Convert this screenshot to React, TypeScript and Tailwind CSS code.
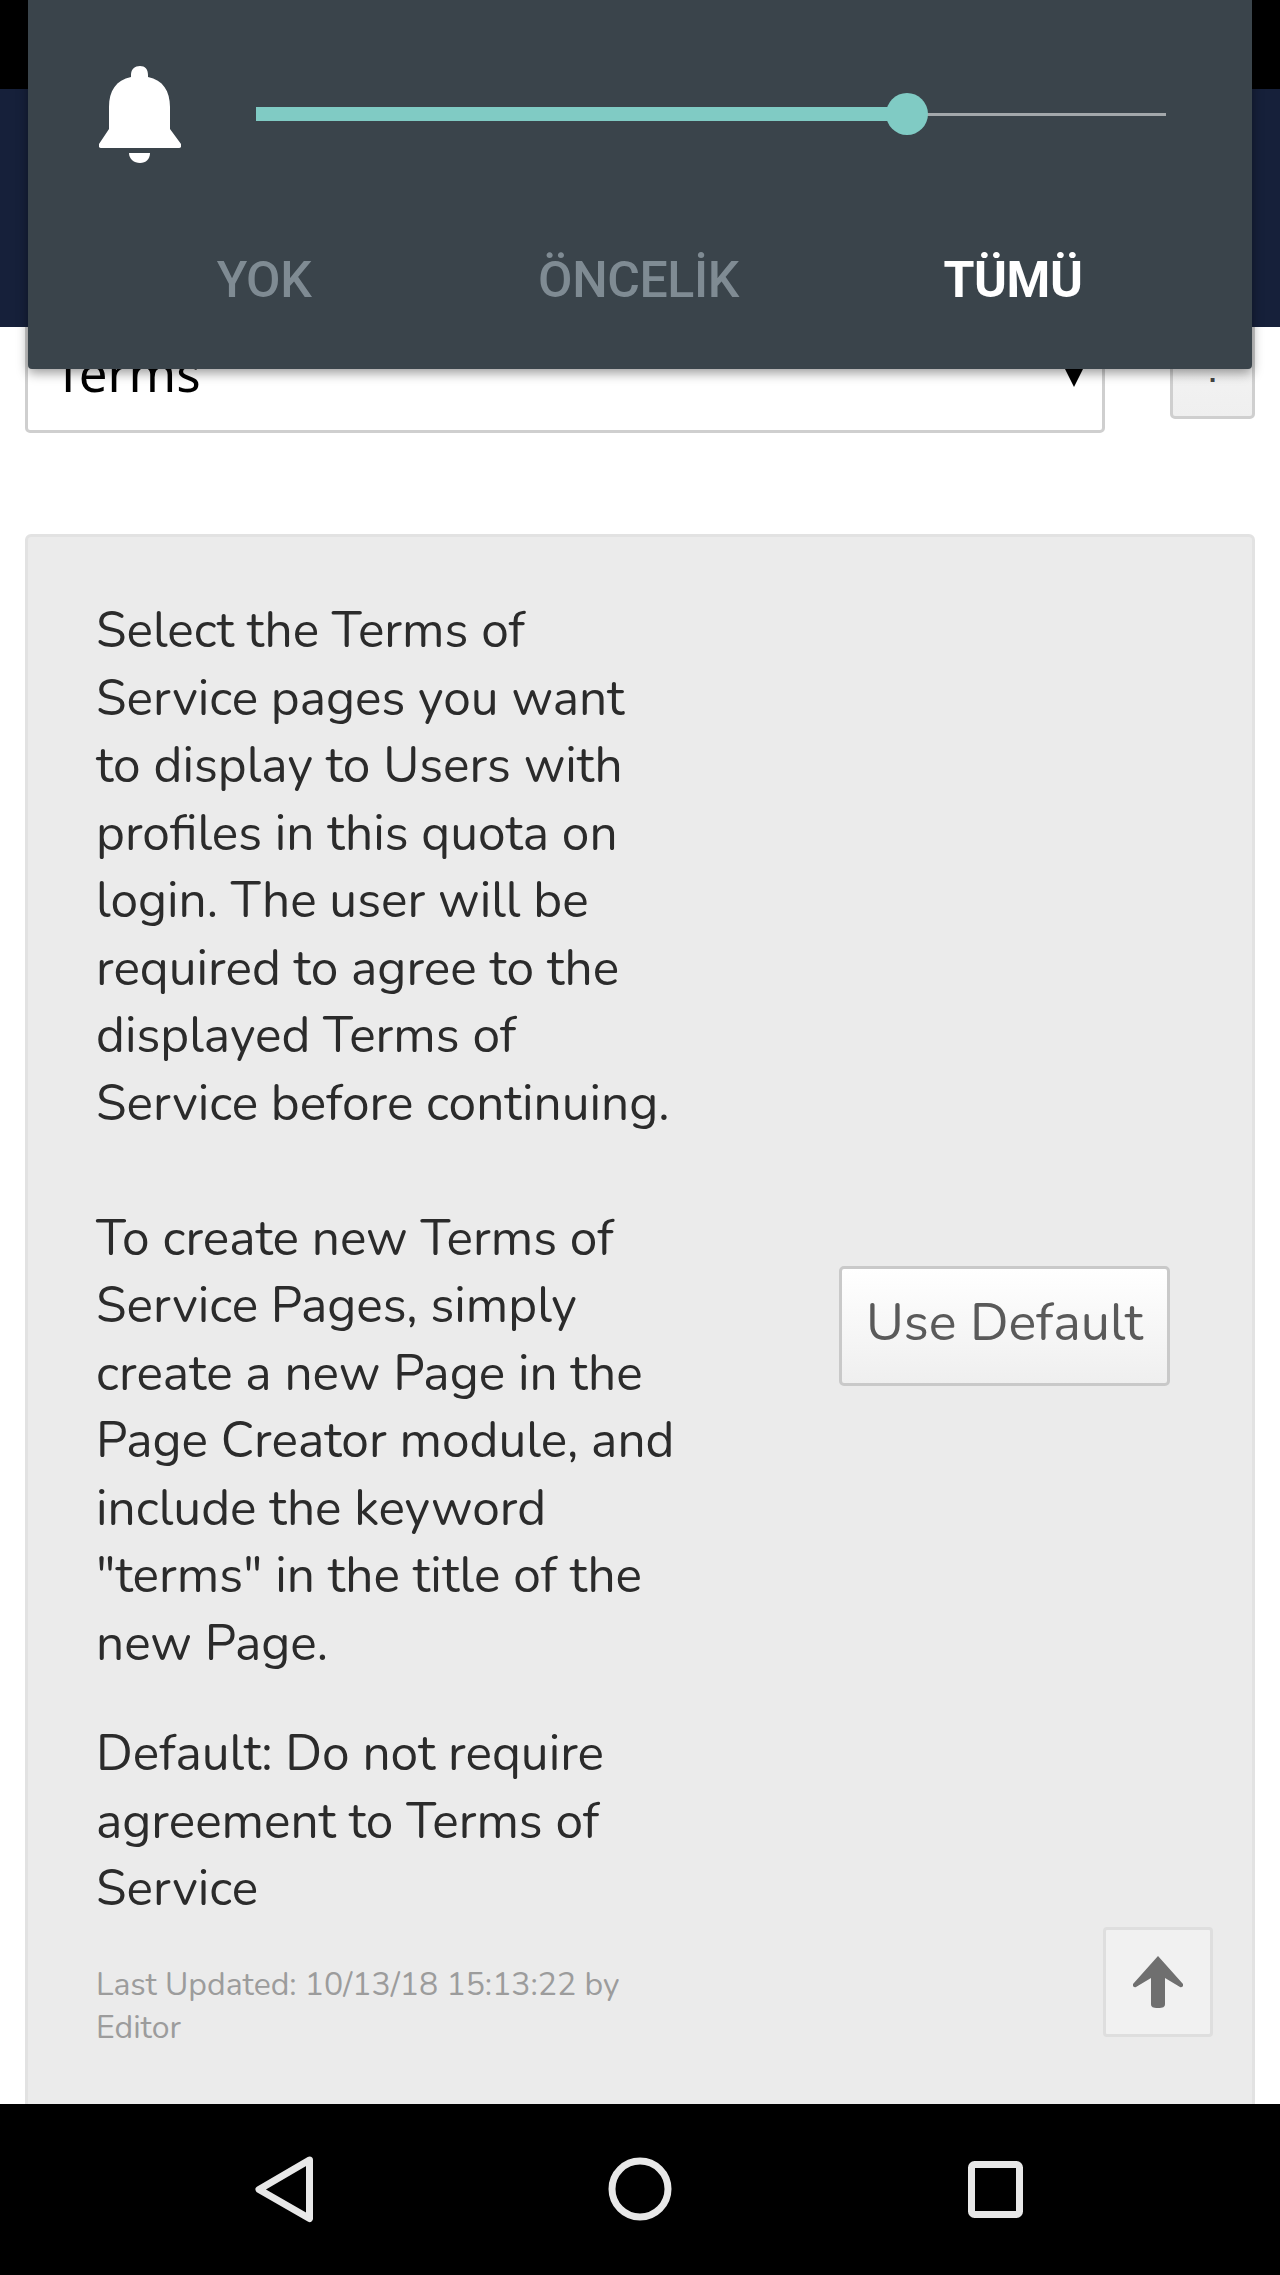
import React from "react";

function Bell() {
  return (
    <svg width="82" height="97" viewBox="0 0 82 97" className="block">
      <path fill="#fff" d="M41 0c5 0 8 3 8 9v2c15 3 22 14 22 30v22l11 15c1 2 0 4-2 4H2c-2 0-3-2-2-4l10-15V41c0-16 7-27 22-30V9c0-6 4-9 9-9z" />
      <path fill="#fff" d="M30 87h21c0 6-4 10-10 10s-11-4-11-10z" />
    </svg>
  );
}

const para1 = ["Select the Terms of", "Service pages you want", "to display to Users with", "profiles in this quota on", "login. The user will be", "required to agree to the", "displayed Terms of", "Service before continuing."];
const para2 = ["To create new Terms of", "Service Pages, simply", "create a new Page in the", "Page Creator module, and", "include the keyword", "\"terms\" in the title of the", "new Page."];
const para3 = ["Default: Do not require", "agreement to Terms of", "Service"];

function Lines({ items }: { items: string[] }) {
  return (
    <>
      {items.map((t) => (
        <div key={t} className="whitespace-nowrap">{t}</div>
      ))}
    </>
  );
}

export default function App() {
  return (
    <div className="relative w-[1280px] h-[2275px] overflow-hidden bg-white flex flex-col font-['Nunito','Lato','Noto_Sans',sans-serif]">
      {/* Notification overlay */}
      <div className="absolute left-[28px] top-0 w-[1224px] h-[369px] z-10 bg-[#3a444b] rounded-b-[4px] shadow-[0_4px_12px_rgba(0,0,0,0.4)] flex flex-col">
        <div className="flex items-center h-[228px] pl-[71px] pr-[86px]">
          <Bell />
          <div className="relative flex items-center ml-[75px] flex-1 h-[44px]">
            <div className="h-[14px] w-[651px] bg-[#80cbc4]" />
            <div className="h-[3px] flex-1 bg-[#a3a8ab]" />
            <div className="absolute left-[630px] top-[1px] w-[42px] h-[42px] rounded-full bg-[#80cbc4]" />
          </div>
        </div>
        <div className="flex pl-[49px] mt-[24px] font-['Roboto',sans-serif] font-medium text-[50px] leading-[56px] tracking-[-0.4px]">
          <div className="w-[374px] text-center text-[#7f8b93]">YOK</div>
          <div className="w-[375px] text-center text-[#7f8b93]">ÖNCELİK</div>
          <div className="w-[374px] text-center text-white font-bold">TÜMÜ</div>
        </div>
      </div>

      {/* Status bar */}
      <div className="h-[89px] bg-black shrink-0" />
      {/* Header */}
      <div className="h-[238px] bg-[#16203a] shrink-0" />

      {/* Content */}
      <div className="flex-1 min-h-0 relative px-[25px] overflow-hidden">
        <div className="flex justify-between items-start -mt-[40px]">
          <div className="w-[1080px] h-[146px] bg-white border-[3px] border-[#cfcfcf] rounded-[5px] flex justify-between pl-[26px] pr-[17px] text-[51px] leading-[68px] text-black font-['Noto_Sans',sans-serif]">
            <span className="mt-[48px]">Terms</span>
            <svg width="22" height="22" viewBox="0 0 22 22" className="mt-[75px]">
              <path fill="#000" d="M0 0h22L11 22z" />
            </svg>
          </div>
          <div className="w-[85px] h-[132px] bg-gradient-to-b from-[#f8f8f8] to-[#efefef] border-[3px] border-[#cfcfcf] rounded-[5px] flex justify-center pt-[58px] text-[#444] text-[40px] leading-[40px] font-['Liberation_Sans',sans-serif]">
            :
          </div>
        </div>

        <div className="mt-[101px] h-[1700px] bg-[#ebebeb] rounded-[6px] border-[3px] border-[#e2e2e2] relative flex">
          <div className="pl-[68px] pt-[61px] w-[740px] text-[49.6px] leading-[67.5px] text-[#2b2b2b]">
            <Lines items={para1} />
            <div className="h-[67.5px]" />
            <Lines items={para2} />
            <div className="mt-[43px]">
              <Lines items={para3} />
            </div>
            <div className="mt-[39px] text-[32px] leading-[43px] text-[#9c9c9c]">
              <div>Last Updated: 10/13/18 15:13:22 by</div>
              <div>Editor</div>
            </div>
          </div>
          <div className="absolute left-[811px] top-[729px] w-[331px] h-[120px] rounded-[5px] border-[3px] border-[#c9c9c9] bg-gradient-to-b from-white to-[#efefef] flex items-center justify-center text-[52px] text-[#5a5a5a] pb-[6px]">
            Use Default
          </div>
          <div className="absolute left-[1075px] top-[1390px] w-[110px] h-[110px] rounded-[4px] border-[3px] border-[#dedede] bg-[#f1f1f1] flex items-center justify-center">
            <svg width="50" height="52" viewBox="0 0 50 52">
              <path fill="#6f6f6f" d="M25 0L50 28c1 2-1 4-3 3l-15-9v26c0 3-2 4-7 4s-7-1-7-4V22L3 31c-2 1-4-1-3-3z" />
            </svg>
          </div>
        </div>
      </div>

      {/* Android nav */}
      <div className="absolute left-0 right-0 bottom-0 h-[171px] bg-black z-20">
        <svg width="1280" height="171" viewBox="0 0 1280 171" className="block">
          <path d="M309.5 56 L259 85.5 L309.5 114.5 Z" fill="none" stroke="#e8e8e8" strokeWidth="7" strokeLinejoin="round" />
          <circle cx="640" cy="85" r="28" fill="none" stroke="#e8e8e8" strokeWidth="7" />
          <rect x="971.5" y="60.5" width="48" height="50" rx="3" fill="none" stroke="#e8e8e8" strokeWidth="7" />
        </svg>
      </div>
    </div>
  );
}
